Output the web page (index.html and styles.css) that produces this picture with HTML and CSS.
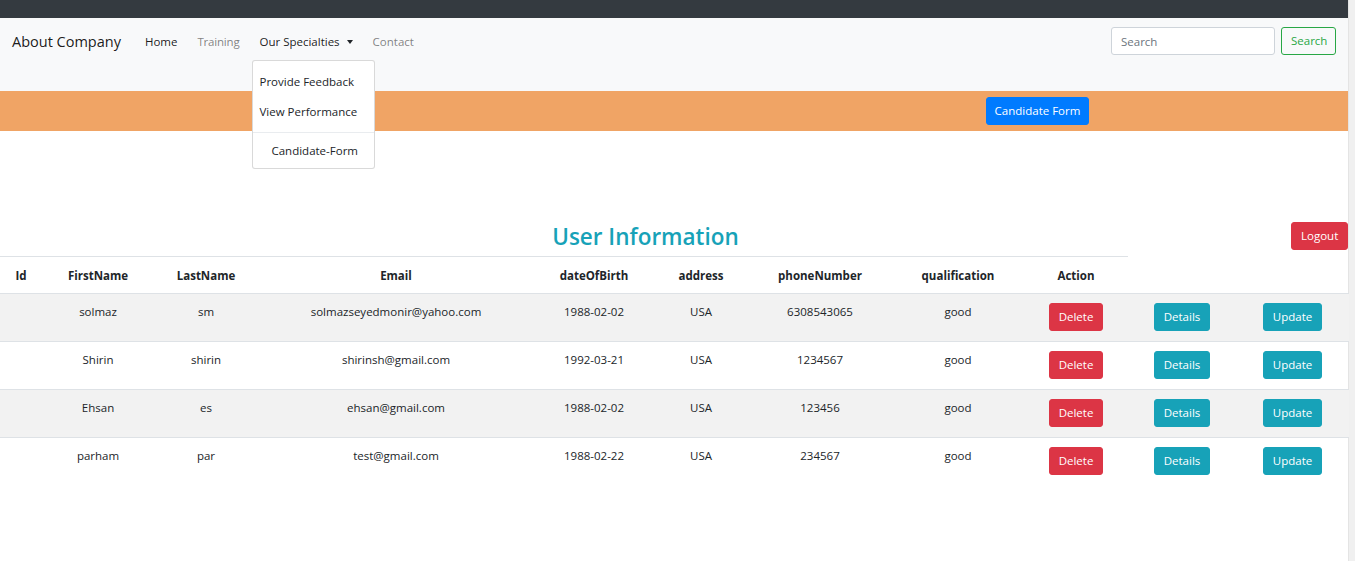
FILE: index.html
```html
<!DOCTYPE html>
<html lang="en">
<head>
<meta charset="utf-8">
<title>User Information</title>
<link rel="stylesheet" href="styles.css">
</head>
<body>
<div class="page">
  <div class="topbar"></div>
  <nav class="navbar">
    <a class="brand" href="#">About Company</a>
    <ul class="nav">
      <li><a class="nav-link active" href="#">Home</a></li>
      <li><a class="nav-link muted" href="#">Training</a></li>
      <li class="dropdown">
        <a class="nav-link active" href="#">Our Specialties <span class="caret"></span></a>
        <div class="dropdown-menu">
          <a class="dropdown-item" href="#">Provide Feedback</a>
          <a class="dropdown-item" href="#">View Performance</a>
          <div class="dropdown-divider"></div>
          <a class="dropdown-item indent" href="#">Candidate-Form</a>
        </div>
      </li>
      <li><a class="nav-link muted" href="#">Contact</a></li>
    </ul>
    <form class="search">
      <input class="search-input" type="text" placeholder="Search">
      <button class="btn btn-outline-success" type="button">Search</button>
    </form>
  </nav>
  <div class="band">
    <button class="btn btn-primary" type="button">Candidate Form</button>
  </div>
  <div class="title-row">
    <h2 class="title">User Information</h2>
    <button class="btn btn-danger" type="button">Logout</button>
  </div>
  <table class="table">
    <colgroup>
      <col style="width:42px"><col style="width:112px"><col style="width:104px"><col style="width:276px">
      <col style="width:120px"><col style="width:94px"><col style="width:144px"><col style="width:132px">
      <col style="width:104px"><col style="width:108px"><col style="width:113px">
    </colgroup>
    <thead>
      <tr>
        <th>Id</th><th>FirstName</th><th>LastName</th><th>Email</th><th>dateOfBirth</th>
        <th>address</th><th>phoneNumber</th><th>qualification</th><th>Action</th>
      </tr>
    </thead>
    <tbody>
      <tr class="striped">
        <td></td><td>solmaz</td><td>sm</td><td>solmazseyedmonir@yahoo.com</td><td>1988-02-02</td><td>USA</td><td>6308543065</td><td>good</td>
        <td><button class="btn btn-danger" type="button">Delete</button></td>
        <td><button class="btn btn-info" type="button">Details</button></td>
        <td><button class="btn btn-info" type="button">Update</button></td>
      </tr>
      <tr>
        <td></td><td>Shirin</td><td>shirin</td><td>shirinsh@gmail.com</td><td>1992-03-21</td><td>USA</td><td>1234567</td><td>good</td>
        <td><button class="btn btn-danger" type="button">Delete</button></td>
        <td><button class="btn btn-info" type="button">Details</button></td>
        <td><button class="btn btn-info" type="button">Update</button></td>
      </tr>
      <tr class="striped">
        <td></td><td>Ehsan</td><td>es</td><td>ehsan@gmail.com</td><td>1988-02-02</td><td>USA</td><td>123456</td><td>good</td>
        <td><button class="btn btn-danger" type="button">Delete</button></td>
        <td><button class="btn btn-info" type="button">Details</button></td>
        <td><button class="btn btn-info" type="button">Update</button></td>
      </tr>
      <tr>
        <td></td><td>parham</td><td>par</td><td>test@gmail.com</td><td>1988-02-22</td><td>USA</td><td>234567</td><td>good</td>
        <td><button class="btn btn-danger" type="button">Delete</button></td>
        <td><button class="btn btn-info" type="button">Details</button></td>
        <td><button class="btn btn-info" type="button">Update</button></td>
      </tr>
    </tbody>
  </table>
</div>
</body>
</html>
```
FILE: styles.css
```css
html {
  background: #f0f0f0;
  height: 100%;
}
body {
  margin: 0;
  font-family: "Open Sans", "Noto Sans", sans-serif;
  font-size: 12px;
  line-height: 18px;
  color: #212529;
}
.page {
  width: 1349px;
  min-height: 561px;
  background: #fff;
  border-right: 1px solid #e4e4e4;
  box-sizing: border-box;
}
a { text-decoration: none; color: inherit; }

.topbar {
  height: 18px;
  background: #343a40;
}

.navbar {
  height: 73px;
  background: #f8f9fa;
  display: flex;
  align-items: flex-start;
  padding: 9px 12px 0 12px;
  box-sizing: border-box;
}
.brand {
  font-size: 14.5px;
  line-height: 30px;
  color: rgba(0,0,0,.9);
  margin-right: 14px;
}
.nav {
  list-style: none;
  margin: 0;
  padding: 0;
  display: flex;
}
.nav-link {
  display: block;
  padding: 6px 10px;
  font-size: 11.5px;
  color: rgba(0,0,0,.9);
}
.nav-link.muted { color: rgba(0,0,0,.5); }
.nav li:nth-child(2) .nav-link { letter-spacing: -0.2px; }
.caret {
  display: inline-block;
  width: 0;
  height: 0;
  margin-left: 4px;
  vertical-align: 2px;
  border-top: 4px solid #212529;
  border-left: 3.5px solid transparent;
  border-right: 3.5px solid transparent;
}
.dropdown { position: relative; }
.dropdown-menu {
  position: absolute;
  top: 33px;
  left: 3px;
  width: 123px;
  box-sizing: border-box;
  background: #fff;
  border: 1px solid rgba(0,0,0,.15);
  border-radius: 3px;
  padding: 6px 0 5px;
  z-index: 5;
}
.dropdown-item {
  display: block;
  padding: 6px 6px;
  font-size: 11.5px;
  color: #212529;
  white-space: nowrap;
}
.dropdown-item.indent {
  padding: 3px 6px 3px 18px;
}
.dropdown-divider {
  height: 0;
  margin: 5px 0 6px;
  border-top: 1px solid #e9ecef;
}

.search {
  margin-left: auto;
  display: flex;
  gap: 6px;
}
.search-input {
  width: 164px;
  height: 28px;
  box-sizing: border-box;
  border: 1px solid #ced4da;
  border-radius: 3px;
  padding: 0 9px;
  font-family: inherit;
  font-size: 11.5px;
  color: #495057;
  background: #fff;
}
.search-input::placeholder { color: #6c757d; }

.btn {
  font-family: inherit;
  font-size: 11.5px;
  line-height: 18px;
  height: 28px;
  padding: 4px 9px;
  border: 1px solid transparent;
  border-radius: 3px;
  box-sizing: border-box;
  cursor: pointer;
  color: #fff;
  white-space: nowrap;
}
.btn-outline-success {
  color: #28a745;
  border-color: #28a745;
  background: transparent;
  width: 55px;
}
.btn-primary { background: #007bff; border-color: #007bff; }
.btn-danger { background: #dc3545; border-color: #dc3545; }
.btn-info { background: #17a2b8; border-color: #17a2b8; }

.band {
  height: 40px;
  background: #f0a465;
  display: flex;
  align-items: center;
  justify-content: flex-end;
  padding-right: 259px;
}
.band .btn { width: 103px; padding: 4px 0; }

.title-row {
  display: flex;
  align-items: flex-start;
  margin-top: 91px;
}
.title {
  flex: 1;
  text-align: center;
  margin: 0 0 5px;
  font-size: 22.5px;
  line-height: 29px;
  font-weight: 600;
  color: #17a2b8;
}
.title-row .btn { width: 57px; }

.table {
  width: 1348px;
  border-collapse: collapse;
  table-layout: fixed;
}
.table th, .table td {
  text-align: center;
  vertical-align: top;
  border-top: 1px solid #dee2e6;
}
.table th {
  padding: 10px 0 8px;
  font-weight: 700;
  font-size: 11.5px;
}
.table td {
  padding: 9px 0 10px;
  font-size: 11.5px;
}
.table td .btn { vertical-align: top; }
.table tr.striped td { background: #f2f2f2; }
```
